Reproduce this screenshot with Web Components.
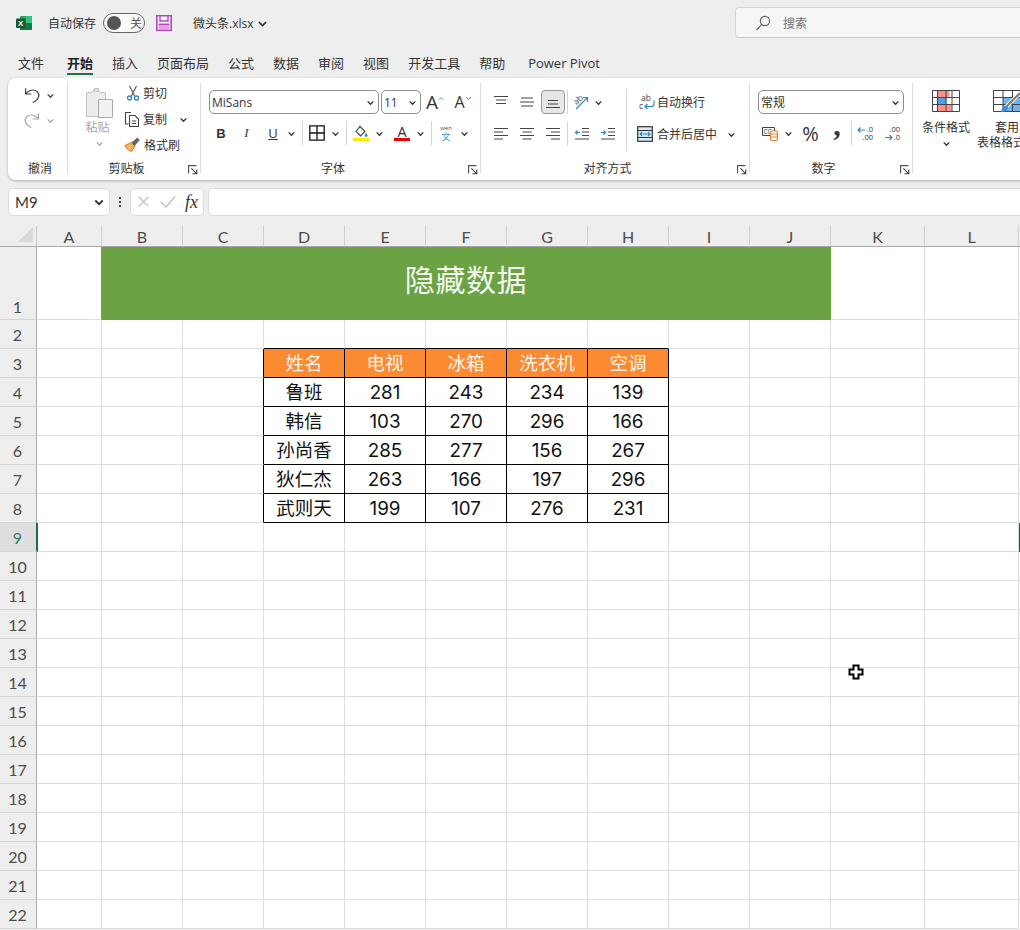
<!DOCTYPE html>
<html lang="zh">
<head>
<meta charset="utf-8">
<title>微头条.xlsx</title>
<style>
html,body{margin:0;padding:0;width:1020px;height:930px;overflow:hidden;background:#eeeeee;color:#333;font:12px "Open Sans","Noto Sans CJK SC",sans-serif}
body{display:flex;flex-direction:column;position:relative}
</style>
</head>
<body>
<x-titlebar></x-titlebar>
<x-tabs></x-tabs>
<x-ribbon></x-ribbon>
<x-formula></x-formula>
<x-sheet></x-sheet>
<x-cursor></x-cursor>
<script>
const ICONS={
 logo:`<rect x="4" y="1" width="12" height="14" rx="1" fill="#21a366"/><rect x="10" y="1" width="6" height="7" fill="#33c481"/><rect x="4" y="8" width="12" height="7" rx="1" fill="#107c41"/><rect x="0" y="3.5" width="9.5" height="9.5" rx="1" fill="#185c37"/><text x="4.7" y="11" font-size="8" font-weight="700" text-anchor="middle" fill="#fff" font-family="Liberation Sans">X</text>`,
 save:`<path d="M.8.8h14.4v14.4H.8z" fill="#fff" stroke="#b244c4" stroke-width="1.6"/><path d="M3 9h10v6H3z" fill="#e89ee3"/><path d="M2.500 9.200h11M4 1v5h8V1" fill="none" stroke="#b244c4" stroke-width="1.4"/>`,
 search:`<g fill="none" stroke="#666" stroke-width="1.2"><circle cx="10" cy="6" r="4.6"/><path d="M6.7 9.3 1.5 15"/></g>`,
 chev:`<path d="M1.5 3 4 5.5 6.5 3" fill="none" stroke="currentColor" stroke-width="1.2"/>`,
 undo:`<path d="M1.600 1.200v5.800h5.800M1.800 6.800C4.500 3 9.800 1.800 13 4.500c3.200 2.900 1.800 7.200-1.200 9.200l-3 1.800" fill="none" stroke="currentColor" stroke-width="1.2"/>`,
 redo:`<path d="M14.400 1.200v5.800H8.600M14.200 6.800C11.500 3 6.200 1.800 3 4.500c-3.200 2.900-1.800 7.200 1.200 9.200l3 1.800" fill="none" stroke="currentColor" stroke-width="1.2"/>`,
 cut:`<path d="M4.500 1 9.600 11M11.500 1 6.400 11" fill="none" stroke="#555" stroke-width="1.1"/><g fill="none" stroke="#2e86c9" stroke-width="1.3"><circle cx="4.500" cy="13" r="2"/><circle cx="11.500" cy="13" r="2"/></g>`,
 copy:`<g fill="none" stroke="#444" stroke-width="1.1"><path d="M7 1.500H1.500v11.500h3"/><path d="M5.500 4.500h5.500l3.500 3.500v7.500h-9z"/><path d="M8 10h4M8 12.500h4"/></g>`,
 painter:`<path d="M.8 8.500 7.500 5.200l3.600 4-3.500 5.200C4 13.500 2 11.500.8 8.500z" fill="#f4a94e" stroke="#c87d22" stroke-width=".8"/><path d="M8 5.500 13.400 1 15.400 3 10.600 8.500z" fill="#666" stroke="#444" stroke-width=".6"/><path d="M3 9.500l3 3M5 8l2.600 3" stroke="#fff" stroke-width=".6"/>`,
 paste:`<path d="M.5 5.500h5l2.500-3h4l2.500 3h5v24H.5z" fill="#ececec" stroke="#c2c2c2"/><path d="M8.500 1.500h4v3h-4z" fill="#e4e4e4" stroke="#c2c2c2"/><path d="M12.500 12.500h14v18h-14z" fill="#f1f1f1" stroke="#aaa"/>`,
 borders:`<path d="M.8.8h14.400v14.400H.8zM8 .8v14.400M.8 8h14.400" fill="none" stroke="#111" stroke-width="1.300"/>`,
 fill:`<path d="M7 1.500 12 6.500 7.500 11 3 6.500z" fill="#fff" stroke="#444" stroke-width="1.100"/><path d="M6 2.500 7 .8" stroke="#444"/><path d="M13 8c1 1.200 1.500 2 1.500 2.600a1.400 1.400 0 0 1-2.800 0C11.700 10 12.200 9.200 13 8z" fill="#2e86c9"/><rect y="13" width="16" height="3" fill="#ffec00"/>`,
 color:`<text x="8" y="11.500" font-size="14.500" text-anchor="middle" fill="#333" font-family="Open Sans">A</text><rect y="13" width="16" height="3" fill="#ee0000"/>`,
 wen:`<text x="8" y="4.500" font-size="6" text-anchor="middle" fill="#555" font-family="Open Sans">wén</text><text x="8" y="15" font-size="9" text-anchor="middle" fill="#3d8fc9" font-family="Noto Sans CJK SC">文</text>`,
 atop:`<path d="M1 2.500h14M3 6h10M3 9.500h10" fill="none" stroke="#444"/>`,
 amid:`<path d="M2 4h12M1 8h14M2 12h12" fill="none" stroke="#444"/>`,
 abot:`<path d="M3 6.500h10M3 10h10M1 13.500h14" fill="none" stroke="#444"/>`,
 left:`<path d="M1 2.500h14M1 6h9M1 9.500h14M1 13h9" fill="none" stroke="#444"/>`,
 center:`<path d="M1 2.500h14M3.500 6h9M1 9.500h14M3.500 13h9" fill="none" stroke="#444"/>`,
 right:`<path d="M1 2.500h14M6 6h9M1 9.500h14M6 13h9" fill="none" stroke="#444"/>`,
 outdent:`<path d="M8 2.500h7M8 6h7M8 9.500h7M1 13h14" fill="none" stroke="#444"/><path d="M6 6.500H1.500M3.500 4.500l-2 2 2 2" fill="none" stroke="#2e86c9" stroke-width="1.200"/>`,
 indent:`<path d="M8 2.500h7M8 6h7M8 9.500h7M1 13h14" fill="none" stroke="#444"/><path d="M1 6.500h4.500M3.500 4.500l2 2-2 2" fill="none" stroke="#2e86c9" stroke-width="1.200"/>`,
 orient:`<text x="1" y="9" font-size="8.500" fill="#444" transform="rotate(-45 5 7)" font-family="Open Sans">ab</text><path d="M3 15 14 4M10 3.500h4.500V8" fill="none" stroke="#2e86c9" stroke-width="1.200"/>`,
 wrap:`<text x="2" y="6.500" font-size="8.500" fill="#444" font-family="Open Sans">ab</text><text x="0" y="15" font-size="8.500" fill="#444" font-family="Open Sans">c</text><path d="M15 6.500v3.500q0 2.500-2.500 2.500H6M8.500 10 6 12.500 8.500 15" fill="none" stroke="#2e86c9" stroke-width="1.200"/>`,
 merge:`<rect x=".7" y=".7" width="14.600" height="14.600" fill="#dbeaf6" stroke="#333" stroke-width="1.200"/><path d="M.7 4.500h14.600M.7 11.500h14.600" stroke="#333"/><path d="M3 8h10M5 6 3 8l2 2M11 6l2 2-2 2" fill="none" stroke="#2e86c9" stroke-width="1.100"/>`,
 numfmt:`<path d="M.5 2.500h12v8H.5z" fill="#fff" stroke="#444"/><text x="1.500" y="9" font-size="6.500" fill="#444" font-family="Open Sans">CC</text><rect x="8.500" y="6" width="7" height="9.500" rx="1.500" fill="#fff" stroke="#e2812a" stroke-width="1.200"/><path d="M8.500 9h7M8.500 12h7" stroke="#e2812a"/>`,
 decup:`<text x="16" y="7" font-size="7.500" text-anchor="end" fill="#333" font-family="Open Sans">.0</text><text x="16" y="15" font-size="7.500" text-anchor="end" fill="#333" font-family="Open Sans">.00</text><path d="M8 5H1M3.500 2.500 1 5l2.500 2.500" fill="none" stroke="#2e86c9" stroke-width="1.100"/>`,
 decdn:`<text x="16" y="7" font-size="7.500" text-anchor="end" fill="#333" font-family="Open Sans">.00</text><text x="16" y="15" font-size="7.500" text-anchor="end" fill="#333" font-family="Open Sans">.0</text><path d="M1 12.500h7M5.500 10 8 12.500 5.500 15" fill="none" stroke="#2e86c9" stroke-width="1.100"/>`,
 launch:`<path d="M.5 7.500v-7h7" fill="none" stroke="#555"/><path d="M3 3l4.500 4.500M7.800 4v3.800H4" fill="none" stroke="#444"/>`,
 corner:`<path d="M15 0v15H0z" fill="#d9d9d9"/>`,
 x:`<path d="M2 2 13 13M13 2 2 13" stroke="#bdbdbd" stroke-width="1.300" fill="none"/>`,
 check:`<path d="M1 8l5 5L15 2.500" stroke="#bdbdbd" stroke-width="1.300" fill="none"/>`,
 cond:`<path d="M5.500 .5h12v7h-12zM5.500 14.500h14v7h-14z" fill="#ff9189"/><path d="M5.500 7.500h9v7h-9z" fill="#4fa3e8"/><path d="M.5.500h27v21H.5zM.5 7.500h27M.5 14.500h27M5.500.5v21M14 .5v21M20 .5v21" fill="none" stroke="#444"/>`,
 table:`<path d="M10 7.500h18v14H10z" fill="#6db5f0"/><path d="M.5.500h30v21H.5zM.5 7.500h30M.5 14.500h30M10 .5v21M19.500 .5v21" fill="none" stroke="#444"/><path d="M13 17 27 3" stroke="#fff" stroke-width="4"/><path d="M14 16 27 3" stroke="#7c7c7c" stroke-width="2"/><path d="M8 22c1-5 4-7 7-6.500 1 3-2 7-7 6.500z" fill="#3b8fd8"/>`,
 cursor:`<path d="M5.500 1.500h5v4h4v5h-4v4h-5v-4h-4v-5h4z" fill="#fff" stroke="#000" stroke-width="2"/>`
};
function svg(name,w,h,vb,extra=''){return `<svg xmlns="http://www.w3.org/2000/svg" width="${w}" height="${h}" viewBox="${vb||`0 0 ${w} ${h}`}" style="display:block;flex:none;overflow:visible;${extra}">${ICONS[name]}</svg>`}
const VB={chev:'0 0 8 8',launch:'0 0 8 8',corner:'0 0 15 15',cond:'0 0 28 22',table:'0 0 31 22',paste:'0 0 27 31'};

class Base extends HTMLElement{
  connectedCallback(){ if(this.shadowRoot) return; this.attachShadow({mode:'open'}).innerHTML=this.render(); }
}
customElements.define('x-tool',class extends Base{
  render(){
    const w=this.getAttribute('w'),i=this.getAttribute('i'),s=+(this.getAttribute('s')||16),h=+(this.getAttribute('h')||s);
    const vb=VB[i]||`0 0 16 16`;
    return `<style>:host{display:inline-flex;align-items:center;justify-content:center;flex:none;${w?`width:${w}px;`:''}height:100%}</style>${i?svg(i,s,h,vb):''}<slot></slot>`;
  }
});
customElements.define('x-titlebar',class extends Base{
  render(){return `<style>
  :host{display:flex;align-items:center;height:46px;flex:none;font-size:12px;color:#333}
  .left{flex:0 0 735px;display:flex;align-items:center;height:100%;box-sizing:border-box;padding-left:16px}
  .toggle{display:flex;align-items:center;width:42px;height:20px;box-sizing:border-box;border:1px solid #666;border-radius:10px;margin-left:7px;background:#fbfbfb}
  .knob{width:14px;height:14px;border-radius:50%;background:#555;margin-left:3px}
  .off{margin-left:9px;color:#555}
  .search{flex:0 0 300px;height:31px;box-sizing:border-box;background:#f6f6f6;border:1px solid #d6d6d6;border-bottom-color:#c8c8c8;border-radius:4px;display:flex;align-items:center;padding-left:19px;gap:12px;color:#707070;margin-bottom:1px}
  </style>
  <div class="left">${svg('logo',16,16,'0 0 16 16')}<span style="margin-left:16px">自动保存</span>
  <div class="toggle"><div class="knob"></div><span class="off">关</span></div>
  <span style="margin-left:11px">${svg('save',16,16,'0 0 16 16')}</span>
  <span style="margin-left:21px">微头条.xlsx</span><span style="margin-left:4px;color:#333">${svg('chev',11,11,'0 0 8 8')}</span></div>
  <div class="search">${svg('search',16,16,'0 0 16 16')}<span>搜索</span></div>`}
});
customElements.define('x-tabs',class extends Base{
  render(){
    const t=['文件','开始','插入','页面布局','公式','数据','审阅','视图','开发工具','帮助'];
    return `<style>
    :host{display:flex;height:32px;flex:none;box-sizing:border-box;padding-left:18px;gap:19px;font-size:13px;color:#333}
    .t{height:100%;display:flex;align-items:center;position:relative;box-sizing:border-box;padding-top:2px;line-height:18px}
    .on{font-weight:700;color:#222;margin-left:4px;box-shadow:inset 0 -3px 0 #eeeeee,inset 0 -5px 0 #1e7145}
    .pp{margin-left:4px}
    </style>${t.map((x,i)=>`<div class="t${i==1?' on':''}">${x}</div>`).join('')}<div class="t pp">Power Pivot</div>`}
});
customElements.define('x-rgroup',class extends Base{
  render(){
    const w=this.getAttribute('w'),l=this.getAttribute('label')||'',li=this.hasAttribute('launch'),pl=this.getAttribute('pl')||0;
    return `<style>
    :host{display:flex;flex-direction:column;flex:none;width:${w}px;height:100%;box-sizing:border-box}
    .body{height:82px;flex:none;display:flex}
    .foot{height:18px;display:flex;align-items:center;flex:none;font-size:12px;color:#333}
    .lab{flex:1;text-align:center;padding-left:${pl}px;line-height:18px}
    .ln{width:15px;flex:none;display:flex;justify-content:flex-start;padding-left:${li?3:0}px;box-sizing:border-box}
    </style><div class="body"><slot></slot></div>
    <div class="foot"><div class="lab">${l}</div>${li?`<div class="ln">${svg('launch',9,9,'0 0 8 8')}</div>`:''}</div>`}
});
customElements.define('x-select',class extends Base{
  render(){
    const w=this.getAttribute('w');
    return `<style>:host{display:flex;align-items:center;justify-content:space-between;flex:none;width:${w}px;height:24px;box-sizing:border-box;border:1px solid #8f8f8f;border-radius:5px;background:#fff;padding:0 3px 0 2px;font-size:12px;color:#333}</style><span><slot></slot></span>${svg('chev',9,9,'0 0 8 8')}`}
});
customElements.define('x-ribbon',class extends Base{
  render(){
    const ch=(w,c)=>`<x-tool w="${w}" i="chev" s="9" ${c?`style="color:${c}"`:''}></x-tool>`;
    return `<style>
    :host{display:flex;flex:none;height:102px;margin-left:8px;width:1040px;background:#fff;border-radius:8px;box-shadow:0 1px 3px rgba(0,0,0,.28);overflow:hidden;font-size:12px;color:#333}
    .sep{flex:none;width:1px;height:90px;margin-top:5px;background:#dcdcdc}
    .col{display:flex;flex-direction:column}
    .row{display:flex;align-items:center;flex:none}
    .vs{display:block;flex:none;width:1px;height:24px;background:#d4d4d4}
    .r24{height:24px}.r20{height:20px}
    .btn{display:flex;align-items:center;justify-content:center;width:24px;height:24px;box-sizing:border-box;background:#e6e6e6;border:1px solid #9a9a9a;border-radius:4px;flex:none}
    b.B{font:700 13px "Liberation Sans",sans-serif;color:#333}
    i.I{font:italic 13px "Liberation Serif",serif;color:#333}
    u.U{font:13px "Open Sans",sans-serif;color:#333}
    .big{font:19px "Open Sans",sans-serif;color:#333;line-height:20px}
    .mid{font:16px "Open Sans",sans-serif;color:#333;line-height:20px}
    .car{margin:0 0 8px 0}
    .gr{color:#a8a8a8}
    .pct{font:20px "Open Sans",sans-serif;color:#333}
    .com{font:700 30px "Liberation Serif",serif;color:#333;line-height:20px;margin-top:-17px}
    .big6{display:flex;flex-direction:column;align-items:center;flex:none;padding-top:12px;height:69px;line-height:15px;white-space:nowrap}
    .big6 span{display:block}
    </style>
    <x-rgroup w="59" label="撤消" pl="5">
      <div class="col" style="padding:7px 0 0 16px;gap:5px">
        <div class="row r20"><x-tool w="16" i="undo" style="color:#444"></x-tool><x-tool w="14" style="margin-left:3px;color:#444" i="chev" s="9"></x-tool></div>
        <div class="row r20 gr"><x-tool w="16" i="redo"></x-tool><x-tool w="14" style="margin-left:3px" i="chev" s="9"></x-tool></div>
      </div>
    </x-rgroup><div class="sep"></div>
    <x-rgroup w="132" label="剪贴板" launch>
      <div class="col gr" style="width:56px;flex:none;align-items:center;padding:9px 0 0 6px;box-sizing:border-box">
        ${svg('paste',27,31,'0 0 27 31')}<span style="line-height:18px;margin:1px 3px 0 0">粘贴</span><span style="margin-top:2px">${svg('chev',9,9,'0 0 8 8')}</span>
      </div>
      <div class="col" style="padding-top:5px;gap:6px">
        <div class="row r20"><x-tool w="16" i="cut" style="margin-left:1px"></x-tool><span style="margin-left:2px">剪切</span></div>
        <div class="row r20"><x-tool w="16" i="copy"></x-tool><span style="margin-left:3px">复制</span><x-tool w="9" i="chev" s="9" style="margin-left:12px"></x-tool></div>
        <div class="row r20"><x-tool w="16" i="painter"></x-tool><span style="margin-left:4px">格式刷</span></div>
      </div>
    </x-rgroup><div class="sep"></div>
    <x-rgroup w="279" label="字体" launch>
      <div class="col" style="padding:12px 0 0 8px;gap:9px">
        <div class="row r24"><x-select w="170">MiSans</x-select><x-select w="40" style="margin-left:2px">11</x-select>
          <x-tool w="18" style="margin-left:5px"><span class="big">A</span><svg class="car" width="7" height="5" viewBox="0 0 7 5"><path d="M1 4 3.500 1.500 6 4" fill="none" stroke="#2e86c9"/></svg></x-tool>
          <x-tool w="18" style="margin-left:10px"><span class="mid">A</span><svg class="car" width="7" height="5" viewBox="0 0 7 5"><path d="M1 1 3.500 3.500 6 1" fill="none" stroke="#2e86c9"/></svg></x-tool>
        </div>
        <div class="row r20">
          <x-tool w="24"><b class="B">B</b></x-tool><x-tool w="27"><i class="I">I</i></x-tool><x-tool w="26"><u class="U">U</u></x-tool>${ch(10)}
          <i class="vs" style="margin-left:6px"></i>
          <x-tool w="27" i="borders"></x-tool>${ch(10)}
          <i class="vs" style="margin-left:6px"></i>
          <x-tool w="28" i="fill"></x-tool>${ch(8)}
          <x-tool w="26" i="color" style="margin-left:6px"></x-tool>${ch(10)}
          <i class="vs" style="margin-left:6px"></i>
          <x-tool w="27" i="wen"></x-tool>${ch(10)}
        </div>
      </div>
    </x-rgroup><div class="sep"></div>
    <x-rgroup w="268" label="对齐方式" launch>
      <div class="col" style="width:145px;flex:none;box-sizing:border-box;padding:12px 0 0 7px;gap:8px">
        <div class="row r24"><x-tool w="26" i="atop"></x-tool><x-tool w="26" i="amid"></x-tool><div class="btn" style="margin-left:1px">${svg('abot',16,16,'0 0 16 16')}</div><i class="vs" style="margin-left:2px"></i><x-tool w="26" i="orient"></x-tool>${ch(8)}</div>
        <div class="row r24"><x-tool w="26" i="left"></x-tool><x-tool w="26" i="center"></x-tool><x-tool w="26" i="right"></x-tool><i class="vs" style="margin-left:1px"></i><x-tool w="28" i="outdent"></x-tool><x-tool w="24" i="indent"></x-tool></div>
      </div>
      <i class="vs" style="height:62px;margin-top:11px"></i>
      <div class="col" style="padding:12px 0 0 10px;gap:8px">
        <div class="row r24"><x-tool w="16" i="wrap" style="margin-left:2px"></x-tool><span style="margin-left:2px">自动换行</span></div>
        <div class="row r24"><x-tool w="16" i="merge"></x-tool><span style="margin-left:4px">合并后居中</span><x-tool w="9" i="chev" s="9" style="margin-left:10px"></x-tool></div>
      </div>
    </x-rgroup><div class="sep"></div>
    <x-rgroup w="162" label="数字" launch>
      <div class="col" style="padding:12px 0 0 8px;gap:9px">
        <div class="row r24"><x-select w="146">常规</x-select></div>
        <div class="row r20"><x-tool w="24" i="numfmt"></x-tool>${ch(12)}<x-tool w="33"><span class="pct">%</span></x-tool><x-tool w="20"><span class="com">,</span></x-tool><i class="vs" style="margin-left:4px"></i><x-tool w="26" i="decup"></x-tool><x-tool w="28" i="decdn"></x-tool></div>
      </div>
    </x-rgroup><div class="sep"></div>
    <x-rgroup w="200">
      <div class="big6" style="width:66px">${svg('cond',28,22,'0 0 28 22')}<span style="margin-top:8px">条件格式</span>${svg('chev',9,9,'0 0 8 8','margin-top:4px')}</div>
      <div class="big6" style="width:48px;margin-left:-2px"><span style="align-self:flex-start;margin-left:16px;height:22px">${svg('table',31,22,'0 0 31 22')}</span><span style="margin-top:8px;padding-left:12px">套用</span><span>表格格式</span></div>
    </x-rgroup>`}
});
customElements.define('x-formula',class extends Base{
  render(){return `<style>
  :host{display:flex;flex:none;height:28px;margin-top:8px;width:1040px;padding-left:8px;box-sizing:border-box;align-items:stretch;color:#333}
  .box{background:#fff;border:1px solid #dcdcdc;border-radius:5px;box-sizing:border-box;display:flex;align-items:center}
  .name{width:102px;justify-content:space-between;padding:0 4px 0 6px;font:15px Lato,"Open Sans",sans-serif}
  .dots{width:20px;display:flex;flex-direction:column;align-items:center;justify-content:center;gap:2px}
  .dots i{display:block;width:2px;height:2px;background:#444}
  .fx{width:74px;gap:0;padding-left:5px}
  .f{font:italic 18px "Liberation Serif",serif;color:#333;margin-left:9px}
  .inp{flex:1;margin-left:4px}
  </style><div class="box name"><span>M9</span>${svg('chev',12,12,'0 0 8 8')}</div>
  <div class="dots"><i></i><i></i><i></i></div>
  <div class="box fx"><span style="margin-left:1px">${svg('x',14,14,'0 0 16 16')}</span><span style="margin-left:9px">${svg('check',16,16,'0 0 16 16')}</span><span class="f">fx</span></div>
  <div class="box inp"></div>`}
});
customElements.define('x-sheet',class extends Base{
  render(){
    const cols=['A','B','C','D','E','F','G','H','I','J','K','L'];
    const data={3:['姓名','电视','冰箱','洗衣机','空调'],4:['鲁班',281,243,234,139],5:['韩信',103,270,296,166],6:['孙尚香',285,277,156,267],7:['狄仁杰',263,166,197,296],8:['武则天',199,107,276,231]};
    let h=`<div class="corner">${svg('corner',15,15,'0 0 15 15')}</div>`;
    cols.forEach(c=>h+=`<div class="ch">${c}</div>`);
    h+=`<div class="ch edge"></div>`;
    for(let r=1;r<=22;r++){
      h+=`<div class="rh${r==9?' sel':''}${r==1?' r1':''}">${r}</div>`;
      if(r==1){
        h+=`<div class="c gb"></div><div class="c title">隐藏数据</div><div class="c"></div><div class="c"></div><div class="m"></div>`;
        continue;
      }
      cols.forEach((c,i)=>{
        let cl='c',t='';
        const d=i-3;
        if(data[r]&&d>=0&&d<5){
          cl+=r==3?' hd':' td';t=data[r][d];
          if(typeof t==='string')cl+=' cj';
        }
        if(data[r]&&i==2)cl+=' br';
        if(r==2&&d>=0&&d<5)cl+=' bb';
        h+=`<div class="${cl}">${t}</div>`;
      });
      h+=`<div class="m${r==9?' msel':''}"></div>`;
    }
    return `<style>
    :host{display:grid;flex:none;margin-top:10px;width:1020px;height:703px;grid-template-columns:37px 65px repeat(9,81px) 94px 94px 2px;grid-template-rows:21px 73px repeat(21,29px);font:16px Lato,"Open Sans",sans-serif;color:#4c4c4c}
    .corner{border-right:1px solid #c8c8c8;border-bottom:1px solid #a8a8a8;box-sizing:border-box;display:flex;justify-content:flex-end;padding:1px 3px 0 0}
    .ch{border-right:1px solid #d0d0d0;border-bottom:1px solid #a8a8a8;box-sizing:border-box;display:flex;align-items:center;justify-content:center;padding-top:1px}
    .edge{border-right:0}
    .rh{border-right:1px solid #a8a8a8;border-bottom:1px solid #d4d4d4;box-sizing:border-box;display:flex;align-items:center;justify-content:center;padding-top:1px;padding-right:1px}
    .r1{align-items:flex-end;padding-bottom:3px}
    .sel{background:#dedede;color:#3a7a5e;border-right:2px solid #1f6b45;margin-right:-1px;position:relative;z-index:1}
    .c{background:#fff;border-right:1px solid #dedede;border-bottom:1px solid #dedede;box-sizing:border-box;display:flex;align-items:center;justify-content:center}
    .gb{border-right-color:#6ba244}
    .title{grid-column:span 9;background:#6ba244;border-color:#6ba244;color:#f4f8ef;font:30px "Noto Sans CJK SC",sans-serif;padding-bottom:10px;letter-spacing:.6px}
    .hd,.td{border-right-color:#000;border-bottom-color:#000;font:380 18.800px Inter,"Noto Sans CJK SC",sans-serif;color:#111}
    .hd{background:#fb8a30;color:#fdf5ec}
    .cj{padding-bottom:3px;font-weight:400;font-size:18.500px}
    .br{border-right-color:#000}
    .bb{border-bottom-color:#000}
    .m{background:#f6f6f6}
    .msel{background:#1f5c40}
    </style>${h}`}
});
customElements.define('x-cursor',class extends Base{
  render(){return `<style>:host{position:absolute;left:848px;top:664px;width:16px;height:16px;display:block}</style>${svg('cursor',16,16,'0 0 16 16')}`}
});
</script>
</body>
</html>
